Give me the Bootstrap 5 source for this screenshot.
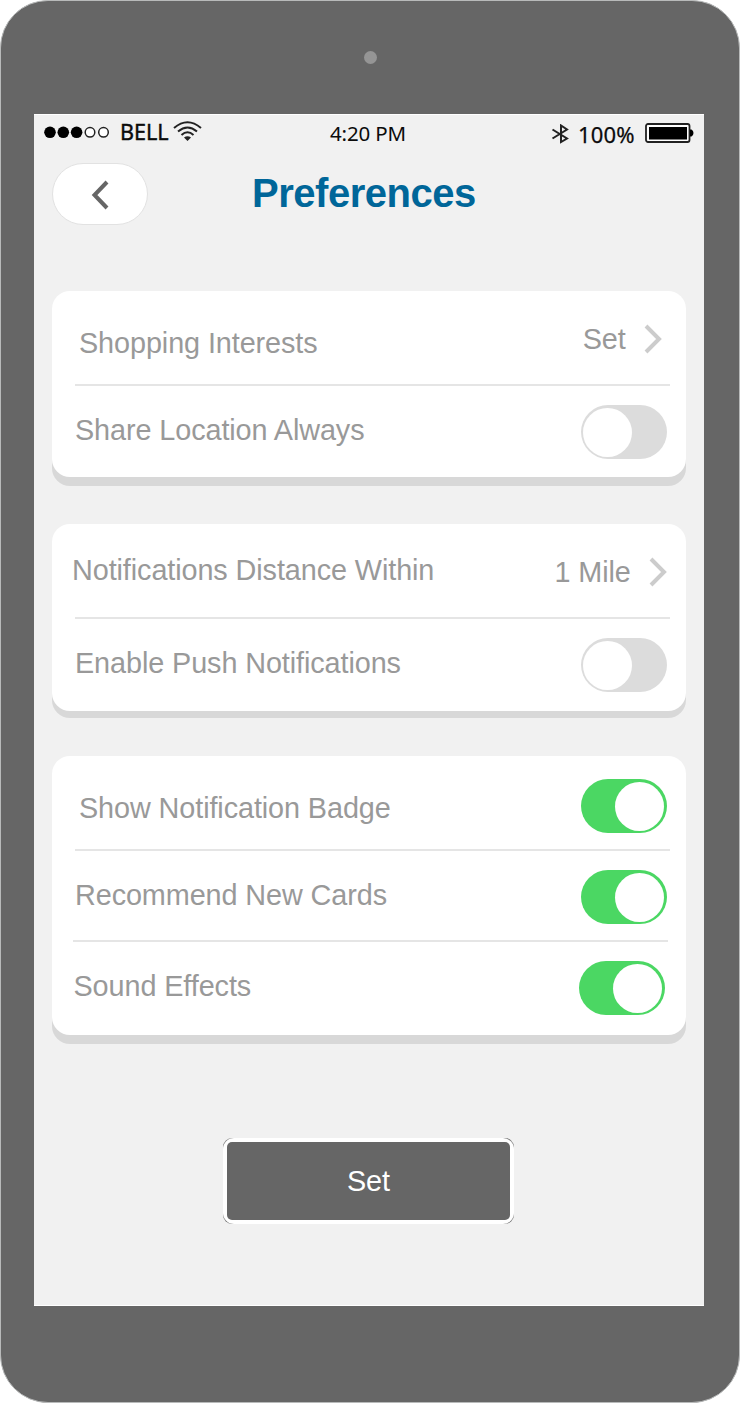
<!DOCTYPE html>
<html lang="en">
<head>
<meta charset="utf-8">
<meta name="viewport" content="width=device-width, initial-scale=1">
<title>Preferences</title>
<link rel="stylesheet" href="https://cdn.jsdelivr.net/npm/bootstrap@5.3.0/dist/css/bootstrap.min.css">
<style>
body { width: 740px; height: 1403px; background: #fff; font-family: "Liberation Sans", Arial, sans-serif; overflow: hidden; }
svg { display: block; flex: none; }
.phone { width: 740px; height: 1403px; background: #666; border: 1px solid #b8baba; border-radius: 48px; padding: 0 35px 0 33px; }
.speaker { height: 113px; padding-top: 50px; }
.lens { width: 13px; height: 13px; background: #959595; margin-left: 2px; }
.display-area { width: 670px; height: 1192px; background: #f1f1f1; box-shadow: inset 0 1px #fff, inset 0 -1px #fff; padding: 0 18px; }
/* status bar */
.status { height: 49px; margin: 0 -18px; color: #0b0b0b; font-family: "Noto Sans", "Open Sans", sans-serif; line-height: 24px; white-space: nowrap; }
.carrier { font-size: 21.6px; margin: 6px 0 0 10px; width: 49px; -webkit-text-stroke: .4px #0b0b0b; }
.clock { font-size: 20.5px; letter-spacing: -.15px; margin: 7px 0 0 127px; width: 80px; }
.charge { font-size: 22px; letter-spacing: .2px; margin: 8px 0 0 8px; width: 59px; -webkit-text-stroke: .25px #0b0b0b; }
.status .i-dots { margin: 12px 0 0 10px; }
.status .i-wifi { margin: 7px 0 0 4px; }
.status .i-bt { margin: 10px 0 0 141px; }
.status .i-batt { margin: 9px 0 0 8px; }
/* header */
.topbar { height: 128px; }
.back { width: 96px; height: 62px; border: 1px solid #e2e2e2; border-radius: 31px; background: #fff; padding: 16px 0 0 38px; }
.topbar h1 { color: #069; font-size: 40px; letter-spacing: -.47px; font-weight: 700; line-height: 46px; margin: 7px 0 0 104px; }
/* preference groups */
.panel { background: #fff; border-radius: 18px; color: #999; font-size: 28.8px; letter-spacing: -.09px; line-height: 32px; white-space: nowrap; }
.panel-a { height: 186px; box-shadow: 0 9px #d8d8d8; margin-bottom: 47px; }
.panel-b { height: 187px; box-shadow: 0 7px #d8d8d8; margin-bottom: 45px; }
.panel-c { height: 279px; box-shadow: 0 9px #d8d8d8; margin-bottom: 103px; }
.rule { height: 2px; width: 595px; margin-left: 23px; background: #e5e5e5; }
.rule.shifted { margin-left: 21px; }
.pref { padding-right: 19.3px; }
.pref.shifted { padding-right: 21.3px; }
.toggle { width: 86px; height: 54px; padding: 2.5px; border-radius: 27px; background: #dcdcdc; }
.toggle::before { content: ""; display: block; width: 49px; height: 49px; border-radius: 50%; background: #fff; }
.toggle.on { background: #4bd763; }
.toggle.on::before { margin-left: auto; }
.h93 { height: 93px; } .h89 { height: 89px; }
.shopping span:first-child { margin: 36px 0 0 27px; }
.shopping span + span { margin: 32px 18px 0 auto; }
.shopping svg { margin: 33px 5px 0 0; }
.distance span:first-child { margin: 30px 0 0 20px; }
.distance span + span { margin: 32px 18px 0 auto; }
.distance svg { margin: 33px 0 0 0; }
.row-share span { margin: 28px 0 0 23px; } .row-share .toggle { margin-top: 19px; }
.row-push span { margin: 28px 0 0 23px; } .row-push .toggle { margin-top: 19px; }
.row-badge span { margin: 36px 0 0 27px; } .row-badge .toggle { margin-top: 23px; }
.row-cards span { margin: 28px 0 0 23px; } .row-cards .toggle { margin-top: 19px; }
.row-sound span { margin: 28px 0 0 21.5px; } .row-sound .toggle { margin-top: 19px; }
/* submit */
.set-frame { width: 291px; height: 86px; background: #777; border-radius: 9px; margin-left: 171px; }
.set-mid { height: 86px; background: #fff; border-radius: 11px; padding: 4px; }
.set-btn { width: 100%; height: 100%; padding: 0; border: 0; font-size: 28.8px; line-height: 32px; }
.set-btn, .set-btn:hover { background: #666; color: #fff; border-radius: 5px; }
</style>
</head>
<body>
<div class="phone">
  <div class="speaker d-flex justify-content-center align-items-start"><div class="lens rounded-circle"></div></div>
  <main class="display-area">
    <div class="status d-flex align-items-start">
      <svg class="i-dots" width="66" height="13" viewBox="0 0 66 13"><g fill="#000"><circle cx="6" cy="6.3" r="5.8"/><circle cx="19.3" cy="6.3" r="5.8"/><circle cx="32.6" cy="6.3" r="5.8"/></g><g fill="#fff" stroke="#222" stroke-width="1.5"><circle cx="46" cy="6.3" r="4.8"/><circle cx="59.5" cy="6.3" r="4.8"/></g></svg>
      <span class="carrier">BELL</span>
      <svg class="i-wifi" width="30" height="20" viewBox="0 0 30 20"><g fill="none" stroke="#222" stroke-width="2"><path d="M1 7Q14.500-4.500 28 7"/><path d="M5 10.500Q14.500 2.500 24 10.500"/><path d="M8.500 14Q14.500 8.500 20.500 14"/></g><path d="M11 16.500Q14.500 14 18 16.500L14.500 20Z" fill="#222"/></svg>
      <span class="clock">4:20 PM</span>
      <svg class="i-bt" width="19" height="20" viewBox="0 0 19 20"><path d="M1.500 5.500L16 14.500L10 18V1.500L16 5.500L1.500 14.500" fill="none" stroke="#222" stroke-width="2"/></svg>
      <span class="charge">100%</span>
      <svg class="i-batt" width="50" height="20" viewBox="0 0 50 20"><rect x="1" y="1" width="43.500" height="18" rx="2" fill="#fff" stroke="#222" stroke-width="1.800"/><path d="M4 4h38v12.500H4z"/><path d="M45 6.500h1.500q2 1 2 3.500t-2 3.500H45z"/></svg>
    </div>
    <header class="topbar d-flex align-items-start">
      <div class="back"><svg width="19" height="30" viewBox="0 0 19 30"><path d="M16 2L3.500 15L16 28" fill="none" stroke="#666" stroke-width="4"/></svg></div>
      <h1>Preferences</h1>
    </header>

    <section class="panel panel-a">
      <div class="pref shopping h93 d-flex align-items-start"><span>Shopping Interests</span><span>Set</span><svg width="18" height="30" viewBox="0 0 18 30"><path d="M2 2L15 15L2 28" fill="none" stroke="#ccc" stroke-width="4"/></svg></div>
      <div class="rule"></div>
      <div class="pref row-share d-flex align-items-start justify-content-between"><span>Share Location Always</span><div class="toggle"></div></div>
    </section>

    <section class="panel panel-b">
      <div class="pref distance h93 d-flex align-items-start"><span>Notifications Distance Within</span><span>1 Mile</span><svg width="18" height="30" viewBox="0 0 18 30"><path d="M2 2L15 15L2 28" fill="none" stroke="#ccc" stroke-width="4"/></svg></div>
      <div class="rule"></div>
      <div class="pref row-push d-flex align-items-start justify-content-between"><span>Enable Push Notifications</span><div class="toggle"></div></div>
    </section>

    <section class="panel panel-c">
      <div class="pref row-badge h93 d-flex align-items-start justify-content-between"><span>Show Notification Badge</span><div class="toggle on"></div></div>
      <div class="rule"></div>
      <div class="pref row-cards h89 d-flex align-items-start justify-content-between"><span>Recommend New Cards</span><div class="toggle on"></div></div>
      <div class="rule shifted"></div>
      <div class="pref shifted row-sound d-flex align-items-start justify-content-between"><span>Sound Effects</span><div class="toggle on"></div></div>
    </section>

    <div class="set-frame"><div class="set-mid"><button type="button" class="btn set-btn">Set</button></div></div>
  </main>
</div>
<script src="https://cdn.jsdelivr.net/npm/bootstrap@5.3.0/dist/js/bootstrap.bundle.min.js"></script>
</body>
</html>
